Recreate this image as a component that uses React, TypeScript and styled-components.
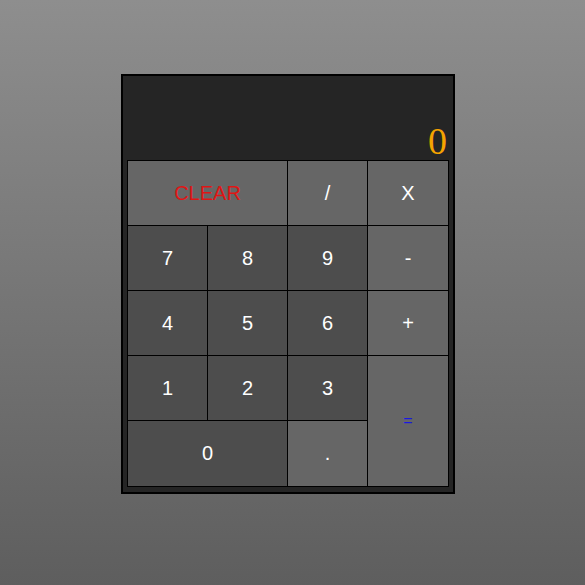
import React, { useState } from "react"
import styled, { createGlobalStyle } from "styled-components"

const Global = createGlobalStyle`
	html, body {
		margin: 0;
		padding: 0;
	}
	body {
		height: 585px;
		background: linear-gradient(#8e8e8e, #5e5e5e);
		font-family: "Liberation Sans", Arial, sans-serif;
	}
`

type Kind = "num" | "op" | "clear" | "eq"

type Key = {
	label: string
	kind: Kind
	span?: number
	rows?: number
}

const KEYS: Key[] = [
	{ label: "CLEAR", kind: "clear", span: 2 },
	{ label: "/", kind: "op" },
	{ label: "X", kind: "op" },
	{ label: "7", kind: "num" },
	{ label: "8", kind: "num" },
	{ label: "9", kind: "num" },
	{ label: "-", kind: "op" },
	{ label: "4", kind: "num" },
	{ label: "5", kind: "num" },
	{ label: "6", kind: "num" },
	{ label: "+", kind: "op" },
	{ label: "1", kind: "num" },
	{ label: "2", kind: "num" },
	{ label: "3", kind: "num" },
	{ label: "=", kind: "eq", rows: 2 },
	{ label: "0", kind: "num", span: 2 },
	{ label: ".", kind: "op" },
]

export default function App() {
	const [value] = useState("0")
	return <>
		<Global/>
		<Page>
			<Calculator>
				<Display>{value}</Display>
				<Keypad>
					{KEYS.map(k =>
						<Button key={k.label} $kind={k.kind} $span={k.span ?? 1} $rows={k.rows ?? 1}>
							{k.label}
						</Button>
					)}
				</Keypad>
			</Calculator>
		</Page>
	</>
}

const Page = styled("div")`
	padding: 74px 0 0 121px;
`
const Calculator = styled("div")`
	background: #252525;
	border: 2px solid #000;
	padding: 0 4px 5px 4px;
	box-sizing: content-box;
	width: 322px;
`
const Display = styled("div")`
	height: 84px;
	display: flex;
	align-items: flex-end;
	justify-content: flex-end;
	padding-right: 2px;
	font-family: "Liberation Serif", "Times New Roman", serif;
	font-size: 38px;
	line-height: 38px;
	color: #f5a300;
	box-sizing: border-box;
`
const Keypad = styled("div")`
	display: grid;
	grid-template-columns: repeat(3, 79px) 80px;
	grid-template-rows: repeat(4, 64px) 65px;
	gap: 1px;
	border: 1px solid #000;
	background: #000;
`
const Button = styled("div")<{ $kind: Kind, $span: number, $rows: number }>`
	grid-column: span ${p => p.$span};
	grid-row: span ${p => p.$rows};
	display: flex;
	align-items: center;
	justify-content: center;
	font-size: ${p => p.$kind === "eq" ? "16px" : "20px"};
	background: ${p => p.$kind === "num" ? "#4d4d4d" : "#666666"};
	color: ${p => p.$kind === "clear" ? "#e01515" : p.$kind === "eq" ? "#1a1ae0" : "#fff"};
	cursor: pointer;
`
